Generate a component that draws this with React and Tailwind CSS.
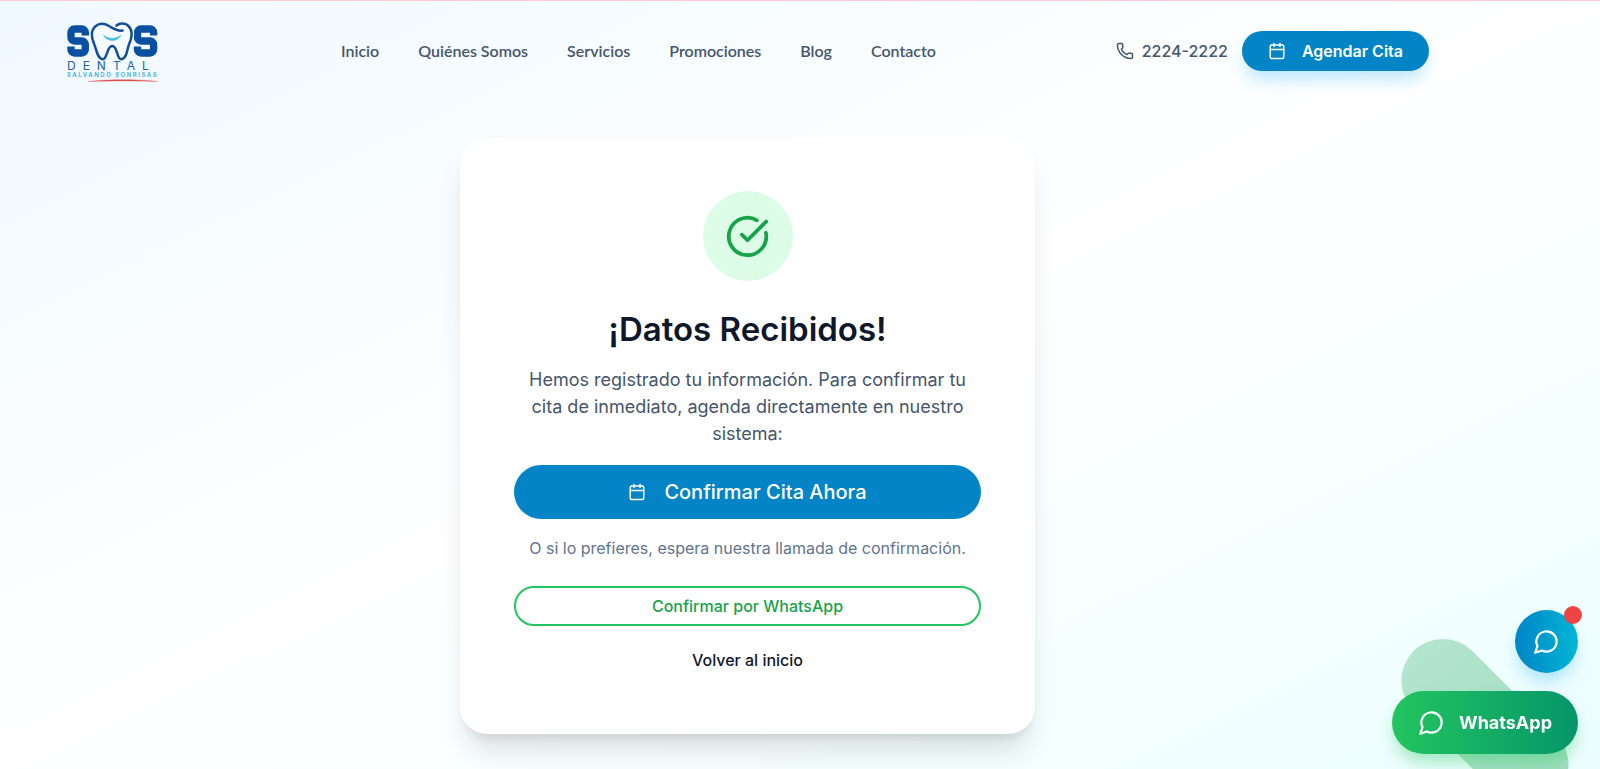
import { Calendar, CircleCheckBig, Phone } from "lucide-react";

const links = ["Inicio", "Quiénes Somos", "Servicios", "Promociones", "Blog", "Contacto"];

function Logo() {
  return (
    <svg viewBox="0 -1 92 62" className="h-[62px] w-[92px]" role="img" aria-label="SOS Dental">
      <g fill="none" stroke="#0b4fa0" strokeWidth="7.4">
        <path d="M18.300 14.500v-3a3.500 3.500 0 0 0-3.500-3.500H7.500a3.500 3.500 0 0 0-3.500 3.500v5a3.500 3.500 0 0 0 3.500 3.500h7.300a3.500 3.500 0 0 1 3.500 3.500v5a3.500 3.500 0 0 1-3.500 3.500H7.500a3.500 3.500 0 0 1-3.500-3.500v-3" />
        <path d="M86.600 14.500v-3a3.500 3.500 0 0 0-3.500-3.500H74a3.500 3.500 0 0 0-3.500 3.500v5a3.500 3.500 0 0 0 3.500 3.500h9.100a3.500 3.500 0 0 1 3.500 3.500v5a3.500 3.500 0 0 1-3.500 3.500H74a3.500 3.500 0 0 1-3.500-3.500v-3" />
      </g>
      <path
        d="M55.500 9.500C50 10.500 46.500 7.500 42 5c-5-3-10-2.800-13.500.2-5.500 4.800-3.500 13-1.200 18.300C29.500 28 30 37.500 35.500 38.200c5 .5 4-13.200 9.700-13.200s4.300 13.700 9.300 13.200c5.500-.7 5.500-10 7.500-14.700 2.500-5.500 4.500-13.500-.5-18.500C58.500 2 53 1.500 49.500 4.500l4 1.500"
        fill="#f4faff"
        stroke="#f4faff"
        strokeWidth="5"
      />
      <path
        d="M55.500 9.500C50 10.500 46.500 7.500 42 5c-5-3-10-2.800-13.500.2-5.500 4.800-3.500 13-1.200 18.300C29.500 28 30 37.500 35.500 38.200c5 .5 4-13.200 9.700-13.200s4.300 13.700 9.300 13.200c5.500-.7 5.500-10 7.500-14.700 2.500-5.500 4.500-13.500-.5-18.500C58.500 2 53 1.500 49.500 4.500"
        fill="none"
        stroke="#134f96"
        strokeWidth="2.500"
        strokeLinecap="round"
        strokeLinejoin="round"
      />
      <path d="M36.500 14c4.500 4.500 13 4.500 17.500 0-3 7-14 7.500-17.500 0z" fill="#3bbbe0" stroke="#3bbbe0" strokeWidth=".6" />
      <text x="0" y="49" fontSize="12" fontFamily="Inter" letterSpacing="7" fill="#2361a8">DENTAL</text>
      <text x="0" y="56" fontSize="6" fontFamily="Inter" fontWeight="700" letterSpacing="1.500" fill="#52b5dc">SALVANDO SONRISAS</text>
      <path d="M21 60.500c20-2.500 50-2.500 70 0-25-.6-45-.8-70 0z" fill="#df4b50" stroke="#df4b50" strokeWidth=".3" />
    </svg>
  );
}

function ChatBubble() {
  return (
    <svg viewBox="0 0 24 24" className="size-[27px]" fill="none" stroke="currentColor" strokeWidth="2" strokeLinecap="round" strokeLinejoin="round" aria-hidden="true">
      <path d="M7.9 20A9 9 0 1 0 4 16.1L2 22Z" />
    </svg>
  );
}

function Header() {
  return (
    <header className="flex items-center border-t border-rose-200 pt-[19px] pr-[171px] pb-2 pl-[67px]">
      <a href="#inicio" className="mr-[182px]"><Logo /></a>
      <nav className="flex gap-[39px] font-['Lato',sans-serif] text-base font-semibold text-slate-600">
        {links.map((link) => (
          <a key={link} href={"#" + link.toLowerCase().replace(" ", "-")} className="whitespace-nowrap">{link}</a>
        ))}
      </nav>
      <div className="ml-auto flex items-center gap-3.5">
        <a href="tel:22242222" className="flex items-center gap-2 font-medium text-slate-600">
          <Phone size={18} />
          2224-2222
        </a>
        <button className="flex h-10 items-center gap-4 rounded-full bg-[#0284c7] px-[26px] font-semibold text-white shadow-[0_11px_17px_-3px_rgba(14,165,233,0.28)]">
          <Calendar size={18} />
          Agendar Cita
        </button>
      </div>
    </header>
  );
}

function Confirmation() {
  return (
    <main className="flex justify-center pt-12 pr-[105px] pb-9">
      <section className="flex w-full max-w-[575px] flex-col items-center rounded-[27px] bg-white px-[54px] pt-[53px] pb-[54px] text-center shadow-[0_22px_28px_-6px_rgba(0,0,0,0.12),0_9px_11px_-7px_rgba(0,0,0,0.1)]">
        <div className="flex size-[90px] items-center justify-center rounded-full bg-[#dcfce7] text-[#16a34a]">
          <CircleCheckBig size={45} />
        </div>
        <h1 className="mt-7 text-[33px] leading-10 font-semibold text-slate-900">¡Datos Recibidos!</h1>
        <p className="mt-[17px] text-lg leading-[27px] text-slate-600">
          Hemos registrado tu información. Para confirmar tu cita de inmediato, agenda directamente en nuestro sistema:
        </p>
        <button className="mt-[18px] flex h-[54px] w-full items-center justify-center gap-[18px] rounded-full bg-[#0284c7] text-xl font-medium text-white">
          <Calendar size={18} />
          Confirmar Cita Ahora
        </button>
        <p className="mt-[17px] text-base text-slate-500">O si lo prefieres, espera nuestra llamada de confirmación.</p>
        <button className="mt-[26px] h-10 w-full rounded-full border-2 border-[#22c55e] font-medium text-[#16a34a]">
          Confirmar por WhatsApp
        </button>
        <button className="mt-[14px] h-10 px-4 font-medium text-slate-900">Volver al inicio</button>
      </section>
    </main>
  );
}

function FloatingButtons() {
  return (
    <div className="fixed right-[22px] bottom-[15px] flex flex-col items-end gap-[18px]">
      <button
        aria-label="Abrir chat"
        className="relative flex size-[63px] items-center justify-center rounded-full bg-linear-to-r from-[#0284c7] to-[#06b6d4] text-white shadow-[0_11px_17px_-3px_rgba(14,165,233,0.3)]"
      >
        <ChatBubble />
        <span className="absolute -top-1 -right-1 size-[18px] rounded-full bg-[#ef4444]" />
      </button>
      <div className="relative">
        <span className="absolute -inset-x-2 -inset-y-2.5 rotate-45 rounded-full bg-linear-to-r from-[#16a34a]/28 to-[#16a34a]/36" />
        <button className="relative flex h-[63px] items-center gap-3.5 rounded-full bg-linear-to-r from-[#22c55e] to-[#059669] px-[26px] text-lg font-bold text-white shadow-[0_11px_17px_-3px_rgba(34,197,94,0.4)]">
          <ChatBubble />
          WhatsApp
        </button>
      </div>
    </div>
  );
}

export default function App() {
  return (
    <div className="min-h-screen overflow-hidden bg-linear-to-br from-sky-50 via-white to-cyan-50 font-['Inter',sans-serif]">
      <Header />
      <Confirmation />
      <FloatingButtons />
    </div>
  );
}
